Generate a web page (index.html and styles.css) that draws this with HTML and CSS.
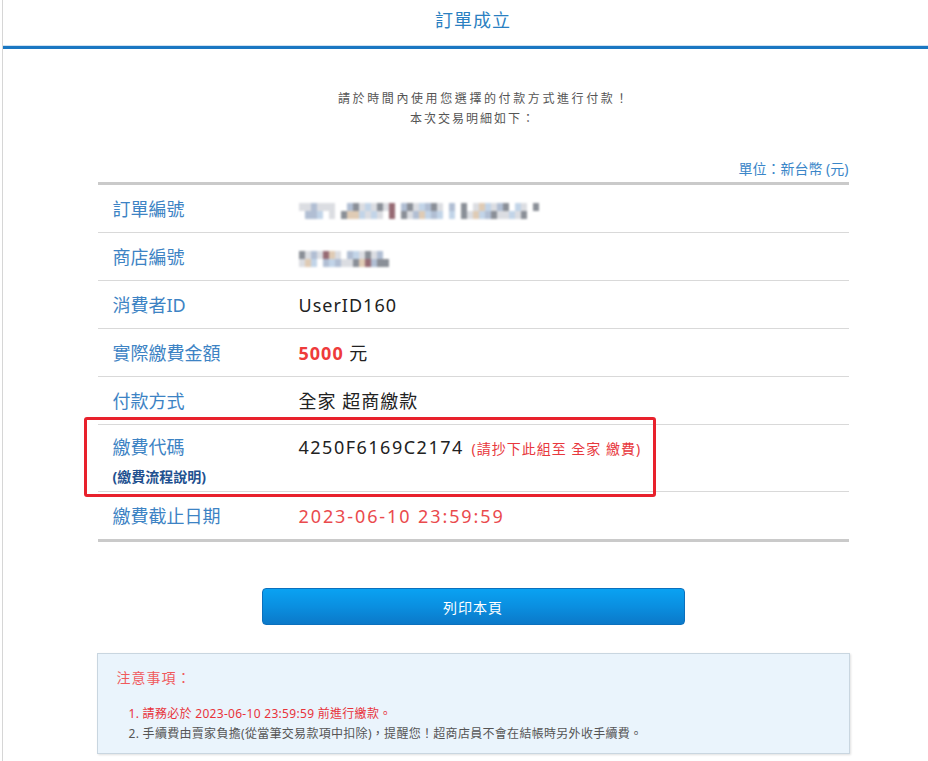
FILE: index.html
```html
<!DOCTYPE html>
<html lang="zh-Hant">
<head>
<meta charset="utf-8">
<title>訂單成立</title>
<link rel="stylesheet" href="styles.css">
</head>
<body>
<div class="page">
  <header class="header">
    <h1 class="title">訂單成立</h1>
  </header>
  <div class="header-bar"></div>

  <div class="intro">
    <p class="intro-main">請於時間內使用您選擇的付款方式進行付款！</p>
    <p>本次交易明細如下：</p>
  </div>

  <div class="content">
    <div class="unit">單位：新台幣 (元)</div>
    <div class="table">
      <div class="row">
        <div class="label">訂單編號</div>
        <div class="value"><span class="mosaic"><i class="a"></i><i class="e"></i><i class="a"></i><i class="b"></i><i class="b"></i><i class="b"></i><i class="a"></i><i class="g"></i><i class="a"></i><i class="e"></i><i class="a"></i><i class="a"></i><i class="e"></i><i class="e"></i><i class="e"></i><i class="c"></i><i class="b"></i><i class="d"></i><i class="c"></i><i class="d"></i><i class="a"></i><i class="g"></i><i class="g"></i><i class="a"></i><i class="a"></i><i class="g"></i><i class="c"></i><i class="a"></i><i class="a"></i><i class="e"></i><i class="f"></i><i class="f"></i><i class="e"></i><i class="e"></i><i class="b"></i><i class="c"></i><i class="c"></i><i class="a"></i><i class="a"></i><i class="b"></i><i class="g"></i><i class="d"></i><i class="b"></i><i class="g"></i><i class="c"></i><i class="b"></i><i class="a"></i><i class="g"></i><i class="e"></i><i class="e"></i><i class="b"></i><i class="g"></i><i class="e"></i><i class="e"></i><i class="c"></i><i class="c"></i><i class="e"></i><i class="a"></i><i class="a"></i><i class="d"></i><i class="d"></i><i class="g"></i><i class="g"></i><i class="b"></i><i class="a"></i><i class="c"></i><i class="b"></i><i class="a"></i><i class="c"></i><i class="a"></i><i class="e"></i><i class="g"></i><i class="g"></i><i class="a"></i><i class="a"></i><i class="c"></i><i class="e"></i><i class="e"></i><i class="c"></i><i class="e"></i></span></div>
      </div>
      <div class="row">
        <div class="label">商店編號</div>
        <div class="value"><span class="mosaic"><i class="c"></i><i class="a"></i><i class="a"></i><i class="d"></i><i class="b"></i><i class="g"></i><i class="a"></i><i class="e"></i><i class="f"></i><i class="b"></i><i class="d"></i><i class="g"></i><i class="a"></i><i class="b"></i><i class="e"></i><i class="a"></i><i class="b"></i><i class="a"></i><i class="g"></i><i class="c"></i><i class="a"></i><i class="d"></i><i class="c"></i><i class="f"></i><i class="a"></i><i class="b"></i><i class="b"></i><i class="c"></i><i class="e"></i><i class="c"></i></span></div>
      </div>
      <div class="row">
        <div class="label">消費者ID</div>
        <div class="value">UserID160</div>
      </div>
      <div class="row">
        <div class="label">實際繳費金額</div>
        <div class="value"><strong class="amount">5000</strong> 元</div>
      </div>
      <div class="row">
        <div class="label">付款方式</div>
        <div class="value">全家 超商繳款</div>
      </div>
      <div class="row row-code">
        <div class="label">
          <div>繳費代碼</div>
          <div class="sub-link">(繳費流程說明)</div>
        </div>
        <div class="value"><span class="code">4250F6169C2174</span> <span class="hint">(請抄下此組至 全家 繳費)</span></div>
      </div>
      <div class="row">
        <div class="label">繳費截止日期</div>
        <div class="value deadline">2023-06-10 23:59:59</div>
      </div>
      <div class="highlight"></div>
    </div>

    <div class="actions">
      <button class="print-btn" type="button">列印本頁</button>
    </div>

    <div class="notice">
      <div class="notice-title">注意事項：</div>
      <div class="notice-list">
        <div class="notice-item warn">1. 請務必於 2023-06-10 23:59:59 前進行繳款。</div>
        <div class="notice-item">2. 手續費由賣家負擔(從當筆交易款項中扣除)，提醒您！超商店員不會在結帳時另外收手續費。</div>
      </div>
    </div>
  </div>
</div>
</body>
</html>
```

FILE: styles.css
```css
html, body {
  margin: 0;
  padding: 0;
  overflow-x: hidden;
  background: #fff;
}

body {
  font-family: "Noto Sans", "Noto Sans CJK TC", sans-serif;
  color: #222;
}

.page {
  margin-left: 2px;
  width: 940px;
  min-height: 761px;
  border-left: 1px solid #d6d6d6;
}

.header {
  height: 45px;
  display: flex;
  align-items: center;
  justify-content: center;
}

.title {
  margin: 0;
  font-size: 18px;
  font-weight: normal;
  letter-spacing: 1px;
  line-height: 40px;
  color: #2a7fc1;
  padding-bottom: 6px;
}

.header-bar {
  height: 3px;
  background: #1a77c2;
  border-top: 1px solid #cfe2f2;
}

.intro {
  margin-top: 40px;
  text-align: center;
  font-size: 12px;
  line-height: 20px;
  color: #555;
  letter-spacing: 2px;
}

.intro p {
  margin: 0;
}

.intro .intro-main {
  letter-spacing: 2.6px;
  padding-left: 22px;
}

.content {
  width: 751px;
  margin: 0 auto;
}

.unit {
  margin-top: 30px;
  text-align: right;
  font-size: 14px;
  line-height: 20px;
  color: #3a86c8;
  margin-bottom: 3px;
}

.table {
  position: relative;
  border-top: 3px solid #cacaca;
  border-bottom: 3px solid #cacaca;
}

.row {
  display: grid;
  grid-template-columns: 201px 1fr;
  align-items: center;
  height: 47px;
  border-bottom: 1px solid #d9d9d9;
  font-size: 18px;
}

.row:nth-last-child(2) {
  border-bottom: none;
}

.label {
  padding-left: 15px;
  color: #3d83c4;
  line-height: 26px;
}

.value {
  color: #222;
  letter-spacing: 1px;
  line-height: 26px;
}

.amount {
  color: #ee3b3b;
  font-weight: bold;
}

.row-code {
  height: 66px;
  align-items: start;
}

.row-code .label {
  padding-top: 8px;
  line-height: 28px;
}

.row-code .value {
  padding-top: 8px;
  line-height: 28px;
}

.code {
  letter-spacing: 1.5px;
}

.sub-link {
  font-size: 14px;
  font-weight: bold;
  color: #22508f;
  line-height: 26px;
  padding-top: 3px;
}

.hint {
  font-size: 14px;
  color: #e8383d;
  letter-spacing: 1px;
  margin-left: 2px;
}

.deadline {
  color: #ea4a4d;
  letter-spacing: 1.9px;
}

.highlight {
  position: absolute;
  left: -14px;
  top: 232px;
  width: 572px;
  height: 80px;
  box-sizing: border-box;
  border: 3px solid #e8212c;
  border-radius: 3px;
  pointer-events: none;
}

.mosaic {
  display: inline-grid;
  grid-template-rows: 8px 8px;
  grid-auto-flow: column;
  grid-auto-columns: 6px;
  vertical-align: middle;
  filter: blur(0.9px);
  opacity: 0.9;
}

.mosaic i {
  display: block;
}

.mosaic .a { background: #d8dadf; }
.mosaic .b { background: #a9b8cf; }
.mosaic .c { background: #7e838c; }
.mosaic .d { background: #dcc6ad; }
.mosaic .e { background: transparent; }
.mosaic .f { background: #8c5c66; }
.mosaic .g { background: #bcd0e6; }

.actions {
  display: flex;
  justify-content: center;
  margin-top: 46px;
}

.print-btn {
  width: 423px;
  height: 37px;
  border: 1px solid #0b70bd;
  border-radius: 4px;
  background: linear-gradient(to bottom, #0aa2f2 0%, #0a8fe0 50%, #0b79c9 100%);
  color: #fff;
  font-family: "Noto Sans", "Noto Sans CJK TC", sans-serif;
  font-size: 14px;
  letter-spacing: 1px;
  cursor: pointer;
}

.notice {
  margin: 28px -1px 0;
  box-sizing: border-box;
  width: 753px;
  background: #eaf4fc;
  border: 1px solid #c9d6e0;
  box-shadow: 1px 1px 2px rgba(0, 0, 0, 0.12);
  padding: 14px 19px 9px;
}

.notice-title {
  font-size: 14px;
  line-height: 20px;
  color: #f05a5c;
  letter-spacing: 1px;
}

.notice-list {
  margin-top: 16px;
  padding-left: 12px;
}

.notice-item {
  font-size: 12px;
  line-height: 20px;
  color: #555;
  letter-spacing: 0.3px;
}

.notice-item.warn {
  color: #e8333b;
}
```
